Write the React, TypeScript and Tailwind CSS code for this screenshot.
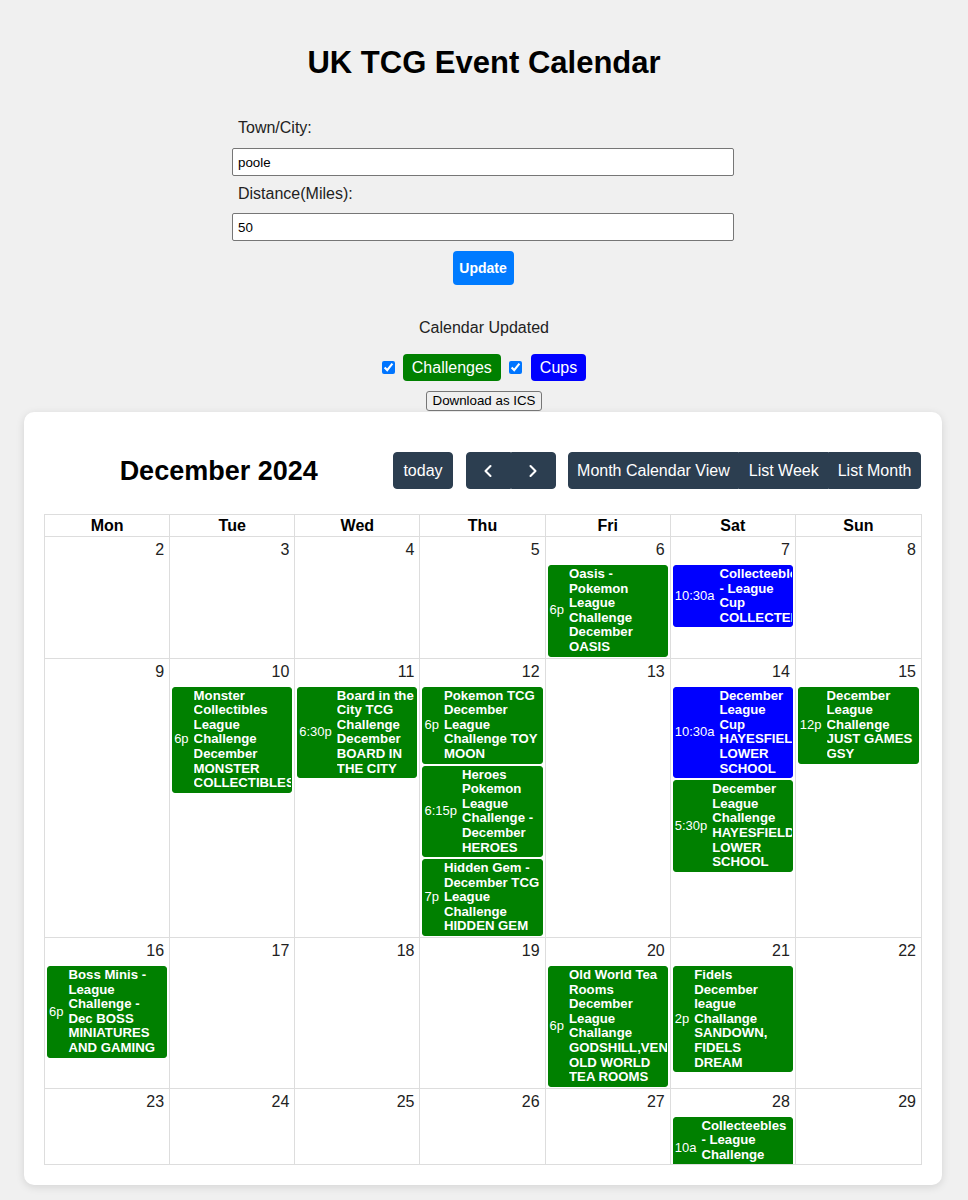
import { ChevronLeft, ChevronRight } from 'lucide-react';

type CalEvent = {
  time: string;
  title: string;
  kind: 'challenge' | 'cup';
};

// December 2024, weeks starting Monday
const weeks: number[][] = [
  [2, 3, 4, 5, 6, 7, 8],
  [9, 10, 11, 12, 13, 14, 15],
  [16, 17, 18, 19, 20, 21, 22],
  [23, 24, 25, 26, 27, 28, 29],
];

const events: Record<number, CalEvent[]> = {
  6: [{ time: '6p', title: 'Oasis - Pokemon League Challenge December OASIS', kind: 'challenge' }],
  7: [{ time: '10:30a', title: 'Collecteebles - League Cup COLLECTEEBLES', kind: 'cup' }],
  10: [{ time: '6p', title: 'Monster Collectibles League Challenge December MONSTER COLLECTIBLES', kind: 'challenge' }],
  11: [{ time: '6:30p', title: 'Board in the City TCG Challenge December BOARD IN THE CITY', kind: 'challenge' }],
  12: [
    { time: '6p', title: 'Pokemon TCG December League Challenge TOY MOON', kind: 'challenge' },
    { time: '6:15p', title: 'Heroes Pokemon League Challenge - December HEROES', kind: 'challenge' },
    { time: '7p', title: 'Hidden Gem - December TCG League Challenge HIDDEN GEM', kind: 'challenge' },
  ],
  14: [
    { time: '10:30a', title: 'December League Cup HAYESFIELD LOWER SCHOOL', kind: 'cup' },
    { time: '5:30p', title: 'December League Challenge HAYESFIELD LOWER SCHOOL', kind: 'challenge' },
  ],
  15: [{ time: '12p', title: 'December League Challenge JUST GAMES GSY', kind: 'challenge' }],
  16: [{ time: '6p', title: 'Boss Minis - League Challenge - Dec BOSS MINIATURES AND GAMING', kind: 'challenge' }],
  20: [{ time: '6p', title: 'Old World Tea Rooms December League Challange GODSHILL,VENTNOR OLD WORLD TEA ROOMS', kind: 'challenge' }],
  21: [{ time: '2p', title: 'Fidels December league Challange SANDOWN, FIDELS DREAM', kind: 'challenge' }],
  28: [{ time: '10a', title: 'Collecteebles - League Challenge COLLECTEEBLES', kind: 'challenge' }],
};

const dayNames = ['Mon', 'Tue', 'Wed', 'Thu', 'Fri', 'Sat', 'Sun'];

function EventBlock({ ev }: { ev: CalEvent }) {
  const colour =
    ev.kind === 'cup' ? 'bg-[#0000ff] border-[#0000ff]' : 'bg-[#008000] border-[#008000]';
  return (
    <div className={`mx-[2px] flex items-center overflow-hidden rounded-[3px] border py-[1px] leading-[14.6px] text-white ${colour}`}>
      <div className="shrink-0 whitespace-nowrap pl-[1px] text-[13px]">{ev.time}</div>
      <div className="ml-[5px] min-w-0 flex-1 overflow-hidden text-[13.2px] font-bold">{ev.title}</div>
    </div>
  );
}

function DayCell({ day, last }: { day: number; last: boolean }) {
  const list = events[day] ?? [];
  return (
    <div className={`border-b border-[#ddd] ${last ? '' : 'border-r'} min-h-[76px]`}>
      <div className="h-[28px] pr-[5px] pt-[4px] text-right text-[16px] leading-[18px] text-[#222]">{day}</div>
      <div className="flex flex-col gap-[2px] pb-[1px]">
        {list.map((ev, i) => (
          <EventBlock key={i} ev={ev} />
        ))}
      </div>
    </div>
  );
}

const darkBtn = 'bg-[#2c3e50] border border-[#2c3e50] text-white text-[16px] leading-[24px] py-[5.5px]';

export default function App() {
  return (
    <div className="min-h-[1200px] bg-[#f0f0f0] font-['Liberation_Sans',Arial,sans-serif] text-[#222]">
      {/* Page heading */}
      <h1 className="pt-[45px] text-center text-[31px] font-bold leading-[36px] text-black">UK TCG Event Calendar</h1>

      {/* Search form */}
      <div className="ml-[232px] mt-[38px] w-[502px]">
        <div className="pl-[6px] text-[16px] leading-[18px] text-[#222]">Town/City:</div>
        <input
          defaultValue="poole"
          className="mt-[11px] block h-[28px] w-full rounded-[2px] border border-[#767676] bg-white px-[5px] text-[13.33px] text-black"
        />
        <div className="mt-[9px] pl-[6px] text-[16px] leading-[18px] text-[#222]">Distance(Miles):</div>
        <input
          defaultValue="50"
          className="mt-[10px] block h-[28px] w-full rounded-[2px] border border-[#767676] bg-white px-[5px] text-[13.33px] text-black"
        />
        <div className="mt-[10px] flex justify-center">
          <button className="h-[34px] w-[61px] rounded-[4px] bg-[#007bff] text-[14px] font-semibold text-white">Update</button>
        </div>
      </div>

      <div className="mt-[34px] text-center text-[16px] leading-[18px] text-[#222]">Calendar Updated</div>

      {/* Filters */}
      <div className="mt-[17px] flex items-center justify-center">
        <input type="checkbox" defaultChecked className="h-[13px] w-[13px] accent-[#0075ff]" />
        <span className="ml-[8px] rounded-[4px] bg-[#008000] px-[9px] text-[16px] leading-[27px] text-white">Challenges</span>
        <input type="checkbox" defaultChecked className="ml-[8px] h-[13px] w-[13px] accent-[#0075ff]" />
        <span className="ml-[9px] rounded-[4px] bg-[#0000ff] px-[9px] text-[16px] leading-[27px] text-white">Cups</span>
      </div>

      <div className="mt-[10px] flex justify-center">
        <button className="h-[20px] rounded-[3px] border border-[#767676] bg-[#efefef] px-[6px] text-[13.33px] leading-[16px] text-black">
          Download as ICS
        </button>
      </div>

      {/* Calendar card */}
      <div className="ml-[24px] mr-[26px] mt-[1px] rounded-[10px] bg-white px-[20px] pb-[20px] pt-[40px] shadow-[0_2px_8px_rgba(0,0,0,0.12)]">
        {/* Toolbar */}
        <div className="flex items-center">
          <h2 className="flex-1 text-center text-[27px] font-bold leading-[32px] text-black">December 2024</h2>
          <button className={`${darkBtn} rounded-[4px] px-[9px]`}>today</button>
          <div className="ml-[13px] flex">
            <button className={`${darkBtn} flex w-[45px] items-center justify-center rounded-l-[4px]`}>
              <ChevronLeft size={20} strokeWidth={2.5} className="my-[2px]" />
            </button>
            <button className={`${darkBtn} flex w-[45px] items-center justify-center rounded-r-[4px]`}>
              <ChevronRight size={20} strokeWidth={2.5} className="my-[2px]" />
            </button>
          </div>
          <div className="ml-[12px] mr-[1px] flex">
            <button className={`${darkBtn} rounded-l-[4px] px-[8.5px]`}>Month Calendar View</button>
            <button className={`${darkBtn} px-[8.5px]`}>List Week</button>
            <button className={`${darkBtn} rounded-r-[4px] px-[8.5px]`}>List Month</button>
          </div>
        </div>

        {/* Month grid */}
        <div className="mt-[25px] border border-[#ddd]">
          <div className="grid grid-cols-7">
            {dayNames.map((d, i) => (
              <div
                key={d}
                className={`border-b border-[#ddd] ${i < 6 ? 'border-r' : ''} h-[22px] text-center text-[16px] font-bold leading-[21px] text-black`}
              >
                {d}
              </div>
            ))}
          </div>
          <div className="h-[627px] overflow-hidden">
            <div className="grid grid-cols-7">
              {weeks.flat().map((day, i) => (
                <DayCell key={day} day={day} last={i % 7 === 6} />
              ))}
            </div>
          </div>
        </div>
      </div>
    </div>
  );
}
